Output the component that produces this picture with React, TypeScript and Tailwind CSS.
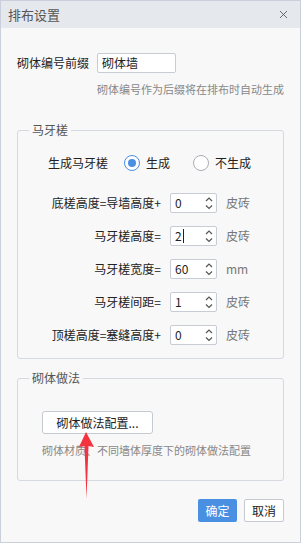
import { X } from "lucide-react";

const spinRows = [
  { label: "底槎高度=导墙高度+", value: "0", unit: "皮砖" },
  { label: "马牙槎高度=", value: "2", unit: "皮砖", caret: true },
  { label: "马牙槎宽度=", value: "60", unit: "mm" },
  { label: "马牙槎间距=", value: "1", unit: "皮砖" },
  { label: "顶槎高度=塞缝高度+", value: "0", unit: "皮砖" },
];

function Spin({ value, caret }: { value: string; caret?: boolean }) {
  return (
    <div className="relative ml-[9px] flex h-[20px] w-[47px] items-center rounded-[2px] border border-[#c8ccd4] bg-white pl-[4px] text-[12px] text-[#222]">
      <span>{value}</span>
      {caret && <span className="ml-[1px] h-[14px] w-px bg-[#222]" />}
      <svg
        className="absolute right-[3px] top-[2px]"
        width="8"
        height="14"
        viewBox="0 0 8 14"
        fill="none"
        stroke="#555"
        strokeWidth="1.2"
      >
        <path d="M1 5 L4 2 L7 5" />
        <path d="M1 9.5 L4 12.5 L7 9.5" />
      </svg>
    </div>
  );
}

function Radio({ checked, label }: { checked: boolean; label: string }) {
  return (
    <div className="flex items-center">
      <span
        className={
          checked
            ? "flex h-[16px] w-[16px] items-center justify-center rounded-full border border-[#4a90e2] bg-white"
            : "flex h-[16px] w-[16px] items-center justify-center rounded-full border border-[#a9adb4] bg-white"
        }
      >
        {checked && <span className="h-[8px] w-[8px] rounded-full bg-[#4a90e2]" />}
      </span>
      <span className="ml-[6px]">{label}</span>
    </div>
  );
}

export default function App() {
  return (
    <div className="relative h-[543px] w-[301px] border border-[#c9cfdb] bg-[#f8f8f8] font-['Noto_Sans_CJK_SC',sans-serif] text-[12px] leading-[16px] text-[#222]">
      <header className="flex h-[27px] items-center justify-between bg-[#e5e8ec] pl-[7px] pr-[10px]">
        <span className="text-[13px] text-[#555]">排布设置</span>
        <X size={13} strokeWidth={1.6} color="#555" />
      </header>

      <div className="mt-[25px] flex items-center pl-[16px]">
        <span className="w-[80px]">砌体编号前缀</span>
        <div className="flex h-[20px] w-[79px] items-center rounded-[2px] border border-[#c8ccd4] bg-white pl-[4px]">
          砌体墙
        </div>
      </div>
      <p className="mt-[9px] pl-[96px] text-[11px] leading-[15px] text-[#888]">
        砌体编号作为后缀将在排布时自动生成
      </p>

      <fieldset className="ml-[16px] mt-[25px] w-[267px] rounded-[3px] border border-[#d5d9e0] pb-[13px]">
        <legend className="ml-[11px] px-[3px] text-[12px] leading-[16px] text-[#555]">
          马牙槎
        </legend>
        <div className="mt-[17px] flex items-center pl-[30px]">
          <span className="w-[76px]">生成马牙槎</span>
          <Radio checked label="生成" />
          <div className="ml-[23px]">
            <Radio checked={false} label="不生成" />
          </div>
        </div>
        <div className="mt-[22px] flex flex-col gap-[13px]">
          {spinRows.map((row) => (
            <div key={row.label} className="flex items-center">
              <span className="w-[143px] text-right">{row.label}</span>
              <Spin value={row.value} caret={row.caret} />
              <span className="ml-[9px] text-[#777]">{row.unit}</span>
            </div>
          ))}
        </div>
      </fieldset>

      <fieldset className="ml-[16px] mt-[11px] w-[267px] rounded-[3px] border border-[#d5d9e0] pb-[22px]">
        <legend className="ml-[11px] px-[3px] text-[12px] leading-[16px] text-[#555]">
          砌体做法
        </legend>
        <div className="mt-[25px] pl-[24px]">
          <button className="flex h-[23px] w-[111px] items-center justify-center rounded-[3px] border border-[#c5c9d0] bg-white text-[12px] text-[#222]">
            砌体做法配置...
          </button>
          <p className="mt-[9px] text-[11px] leading-[15px] text-[#888]">
            砌体材质、不同墙体厚度下的砌体做法配置
          </p>
        </div>
      </fieldset>

      <div className="mt-[18px] flex justify-end gap-[7px] pr-[16px]">
        <button className="flex h-[23px] w-[39px] items-center justify-center rounded-[2px] bg-[#4a90e2] text-[12px] text-white">
          确定
        </button>
        <button className="flex h-[23px] w-[40px] items-center justify-center rounded-[2px] border border-[#c5c9d0] bg-white text-[12px] text-[#222]">
          取消
        </button>
      </div>

      {/* red arrow */}
      <svg
        className="pointer-events-none absolute left-0 top-0"
        width="301"
        height="543"
        viewBox="0 0 301 543"
      >
        <polygon
          points="85,431 93,446 87.5,445 85.5,498 83.5,445 78,446"
          fill="#f5333f"
        />
      </svg>
    </div>
  );
}
